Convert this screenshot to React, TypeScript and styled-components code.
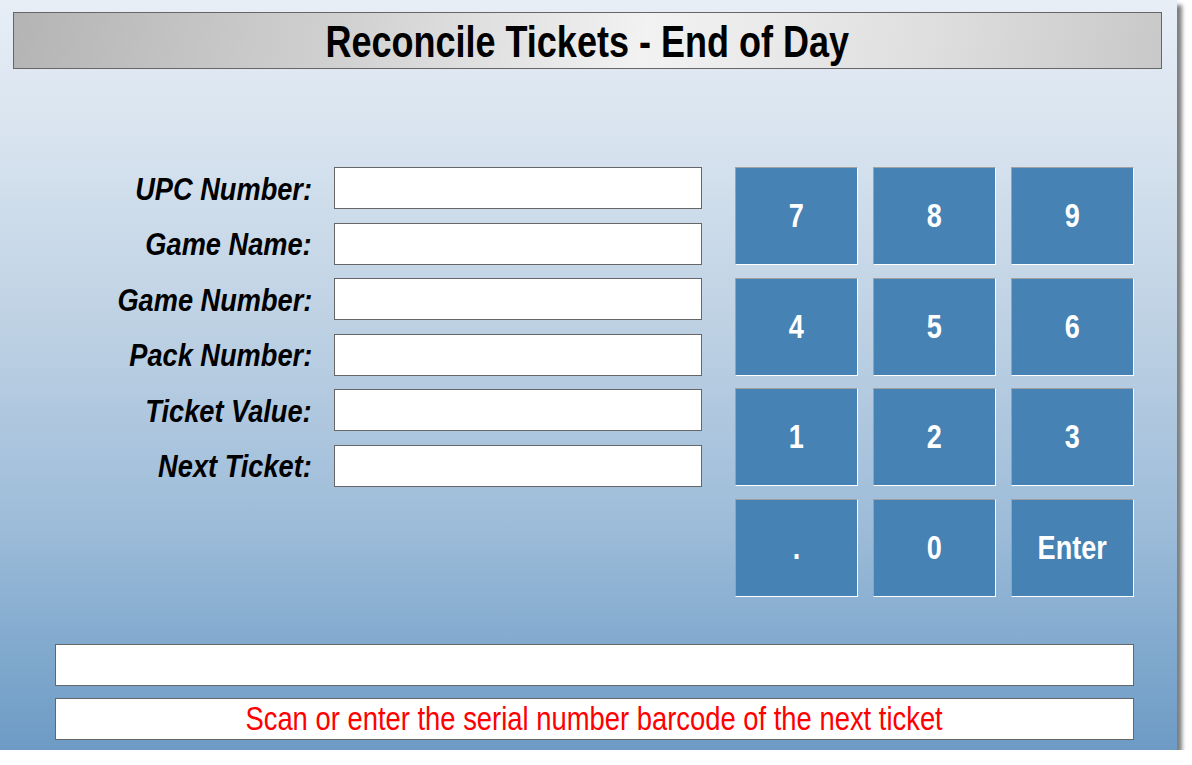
import React from 'react';
import styled, {createGlobalStyle} from 'styled-components';

const GlobalStyle = createGlobalStyle`
    html, body {
        margin: 0;
        padding: 0;
        background: #ffffff;
    }
    body {
        font-family: 'Liberation Sans Narrow', 'Liberation Sans', Arial, sans-serif;
    }
`;

const fields = ['UPC Number:', 'Game Name:', 'Game Number:', 'Pack Number:', 'Ticket Value:', 'Next Ticket:'];

const keys = ['7', '8', '9', '4', '5', '6', '1', '2', '3', '.', '0', 'Enter'];

export default function App() {
    return (
        <>
            <GlobalStyle />
            <Panel>
                <TitleBar>
                    <Narrow scale={0.8}>Reconcile Tickets - End of Day</Narrow>
                </TitleBar>
                <Main>
                    <Form>
                        {fields.map((label) => (
                            <React.Fragment key={label}>
                                <Label>
                                    <Narrow scale={0.85} origin='right'>
                                        {label}
                                    </Narrow>
                                </Label>
                                <Field />
                            </React.Fragment>
                        ))}
                    </Form>
                    <Keypad>
                        {keys.map((k) => (
                            <Key key={k}>
                                <Narrow>{k}</Narrow>
                            </Key>
                        ))}
                    </Keypad>
                </Main>
                <Footer>
                    <Box />
                    <Box>
                        <Message>
                            <Narrow scale={0.83}>Scan or enter the serial number barcode of the next ticket</Narrow>
                        </Message>
                    </Box>
                </Footer>
            </Panel>
        </>
    );
}

// no narrow face installed, so squeeze the regular one to Arial Narrow widths
const Narrow = styled.span<{scale?: number; origin?: string}>`
    display: inline-block;
    white-space: nowrap;
    transform: scaleX(${({scale}) => scale || 0.82});
    transform-origin: ${({origin}) => origin || 'center'};
`;

const Panel = styled.div`
    width: 1177px;
    height: 750px;
    box-sizing: border-box;
    padding: 12px 0 10px;
    display: flex;
    flex-direction: column;
    background: linear-gradient(to bottom, #e7eef6 0%, #d6e2ee 20%, #bcd0e3 45%, #9dbcd9 70%, #7fa8cd 88%, #6d9bc5 100%);
    box-shadow: 5px 5px 4px rgba(0, 0, 0, 0.5);
`;

const TitleBar = styled.div`
    height: 57px;
    margin: 0 15px 0 13px;
    box-sizing: border-box;
    border: 1px solid #666;
    background: linear-gradient(100deg, #b4b4b4 0%, #d2d2d2 30%, #f2f2f2 55%, #dedede 80%, #c8c8c8 100%);
    display: flex;
    align-items: center;
    justify-content: center;
    font-size: 45px;
    font-weight: bold;
    color: #000;
    padding-top: 2px;
`;

const Main = styled.div`
    margin-top: 98px;
    height: 430px;
    padding: 0 43px 0 55px;
    display: flex;
    justify-content: space-between;
`;

const Form = styled.div`
    display: grid;
    grid-template-columns: 257px 368px;
    grid-auto-rows: 42px;
    column-gap: 22px;
    row-gap: 13.6px;
    align-content: start;
`;

const Label = styled.div`
    display: flex;
    align-items: center;
    justify-content: flex-end;
    font-size: 32px;
    font-weight: bold;
    font-style: italic;
    color: #000;
    padding-top: 2px;
`;

const Field = styled.div`
    box-sizing: border-box;
    border: 1px solid #666;
    background: #fff;
`;

const Keypad = styled.div`
    display: grid;
    grid-template-columns: repeat(3, 123px);
    grid-template-rows: repeat(4, 98px);
    column-gap: 15px;
    row-gap: 12.7px;
`;

const Key = styled.div`
    box-sizing: border-box;
    background: #4682b4;
    border: 1px solid #ffffff;
    border-top-color: #a0a0a0;
    border-left-color: #a0a0a0;
    color: #fff;
    font-size: 33px;
    font-weight: bold;
    display: flex;
    align-items: center;
    justify-content: center;
`;

const Footer = styled.div`
    margin-top: 47px;
    padding: 0 43px 0 55px;
    display: flex;
    flex-direction: column;
    gap: 12px;
`;

const Box = styled.div`
    height: 42px;
    box-sizing: border-box;
    border: 1px solid #666;
    background: #fff;
    display: flex;
    align-items: center;
    justify-content: center;
`;

const Message = styled.span`
    color: #ff0000;
    font-size: 33px;
`;
